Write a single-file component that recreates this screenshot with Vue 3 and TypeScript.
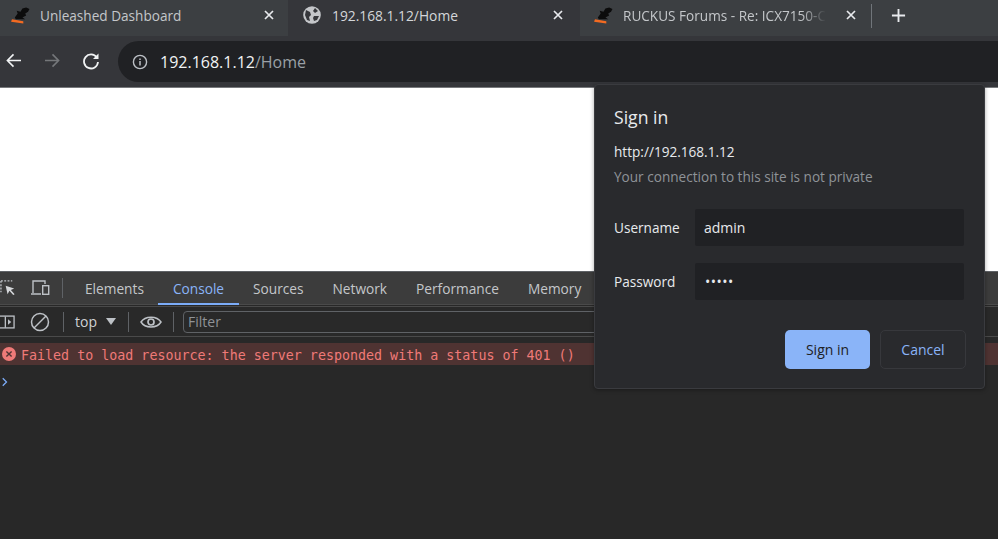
<script setup lang="ts">
const tabs = [
  { title: 'Unleashed Dashboard', icon: 'dog', cls: 'first' },
  { title: '192.168.1.12/Home', icon: 'globe', cls: 'active' },
  { title: 'RUCKUS Forums - Re: ICX7150-C', icon: 'dog', cls: 'third' },
]
const devTabs = ['Elements', 'Console', 'Sources', 'Network', 'Performance', 'Memory']
</script>

<template>
  <div class="page">
    <div class="strip">
      <div v-for="t in tabs" :key="t.title" class="tab" :class="t.cls">
        <svg v-if="t.icon === 'dog'" class="fav" viewBox="0 0 20 18">
          <path d="M4 11 L7 7 L6 4 L10 5 L12 1.500 L16 0.500 L19.500 2 L18 5 L15 7 L16 9 L12 11 L15 13 L5 13 Z" fill="#0c0c0c" />
          <path d="M1 13 L13 15 L13 17.500 L0 15.500 Z" fill="#f26a21" />
        </svg>
        <svg v-else class="fav globe" viewBox="0 0 18 18">
          <circle cx="9" cy="9" r="8.800" fill="#c4c6c9" />
          <path d="M3 4 L7 6 L8 9 L6 11 L7 15 L4 14 L2 9 Z M12 2 L15 5 L12 7 L10 5 Z M11 10 L16 10 L14 14 L11 15 L10 12 Z" fill="#36373b" />
        </svg>
        <span class="tab-title">{{ t.title }}</span>
        <svg class="close" viewBox="0 0 10 10"><path d="M1 1 L9 9 M9 1 L1 9" stroke="#e8eaed" stroke-width="1.7" /></svg>
      </div>
      <span class="sep"></span>
      <svg class="plus" viewBox="0 0 16 16"><path d="M8 1 V15 M1 8 H15" stroke="#e8eaed" stroke-width="2" /></svg>
    </div>

    <div class="toolbar">
      <svg class="nav back" viewBox="0 0 16 16"><path d="M16 8 H1.500 M8 1.500 L1.500 8 L8 14.500" fill="none" stroke="#f1f3f4" stroke-width="1.700" /></svg>
      <svg class="nav fwd" viewBox="0 0 16 16"><path d="M0 8 H14.500 M8 1.500 L14.500 8 L8 14.500" fill="none" stroke="#75777a" stroke-width="1.700" /></svg>
      <svg class="nav reload" viewBox="0 0 18 18"><path d="M14.800 5.500 A7 7 0 1 0 16 10" fill="none" stroke="#f1f3f4" stroke-width="1.800" /><path d="M16.500 1.500 V7 H11 Z" fill="#f1f3f4" /></svg>
      <div class="omni">
        <svg class="info" viewBox="0 0 16 16"><circle cx="8" cy="8" r="6.600" fill="none" stroke="#bdc1c6" stroke-width="1.400" /><path d="M8 7 V11.500 M8 4.400 V5.900" stroke="#bdc1c6" stroke-width="1.500" /></svg>
        <span class="host">192.168.1.12</span><span class="path">/Home</span>
      </div>
    </div>

    <div class="content"></div>

    <div class="devtools">
      <div class="dt-tabs">
        <svg class="dt-ic inspect" viewBox="0 0 18 18"><path d="M1 1 H13 M1 1 V13" stroke="#bdc1c6" stroke-width="1.400" stroke-dasharray="2 1.500" fill="none" /><path d="M6 6 L15 9 L11.500 10.500 L15.500 15 L14 16 L10 11.500 L8 15 Z" fill="#d5d7da" /></svg>
        <svg class="dt-ic device" viewBox="0 0 20 18"><path d="M3 14 V2 H15 V5 M1 15 H11" fill="none" stroke="#bdc1c6" stroke-width="1.400" /><rect x="12.700" y="6.700" width="6" height="8.600" fill="none" stroke="#bdc1c6" stroke-width="1.400" /></svg>
        <span class="dt-sep"></span>
        <span v-for="d in devTabs" :key="d" class="dt-tab" :class="{ on: d === 'Console' }">{{ d }}</span>
      </div>
      <div class="filter-row">
        <svg class="side" viewBox="0 0 16 16"><rect x="-3" y="1.700" width="18" height="12.600" fill="none" stroke="#bdc1c6" stroke-width="1.400" /><path d="M5.700 2 V14" stroke="#bdc1c6" stroke-width="1.400" /><path d="M8.500 5 L12 8 L8.500 11 Z" fill="#bdc1c6" /></svg>
        <svg class="clear" viewBox="0 0 20 20"><circle cx="10" cy="10" r="8.500" fill="none" stroke="#bdc1c6" stroke-width="1.500" /><path d="M4 16 L16 4" stroke="#bdc1c6" stroke-width="1.500" /></svg>
        <span class="f-sep"></span>
        <span class="top">top</span>
        <span class="caret"></span>
        <span class="f-sep"></span>
        <svg class="eye" viewBox="0 0 22 14"><path d="M1 7 C5 0.500 17 0.500 21 7 C17 13.500 5 13.500 1 7 Z" fill="none" stroke="#bdc1c6" stroke-width="1.500" /><circle cx="11" cy="7" r="3" fill="none" stroke="#bdc1c6" stroke-width="1.700" /></svg>
        <span class="f-sep"></span>
        <div class="filter">Filter</div>
      </div>
      <div class="err-row">
        <svg class="err-ic" viewBox="0 0 14 14"><circle cx="7" cy="7" r="7" fill="#ef7a78" /><path d="M4.400 4.400 L9.600 9.600 M9.600 4.400 L4.400 9.600" stroke="#4f3332" stroke-width="1.400" /></svg>
        <span class="err-text">Failed to load resource: the server responded with a status of 401 ()</span>
      </div>
      <div class="prompt-row">
        <svg class="prompt" viewBox="0 0 8 12"><path d="M1 1 L6 6 L1 11" fill="none" stroke="#7cacf8" stroke-width="1.700" /></svg>
      </div>
    </div>

    <div class="dialog">
      <h1>Sign in</h1>
      <div class="origin">http://192.168.1.12</div>
      <div class="private">Your connection to this site is not private</div>
      <div class="field first-field"><label>Username</label><div class="input">admin</div></div>
      <div class="field"><label>Password</label><div class="input dots">•••••</div></div>
      <div class="actions">
        <button class="primary">Sign in</button>
        <button class="cancel">Cancel</button>
      </div>
    </div>
  </div>
</template>

<style>
html, body { margin: 0; padding: 0; background: #282828; overflow: hidden; }
</style>

<style scoped>
.page {
  position: relative;
  width: 998px;
  height: 539px;
  overflow: hidden;
  display: flex;
  flex-direction: column;
  background: #282828;
  font-family: "Open Sans", "Noto Sans", sans-serif;
}
.strip {
  height: 36px;
  flex: none;
  display: flex;
  align-items: flex-start;
  background: #3c3f42;
}
.tab {
  display: flex;
  align-items: center;
  box-sizing: border-box;
  height: 36px;
  padding-bottom: 6px;
  color: #c4c7ca;
  font-size: 13.6px;
  white-space: nowrap;
  flex: none;
}
.tab.first { width: 288px; padding-left: 11px; border-radius: 0 0 8px 0; }
.tab.active { width: 292px; padding-left: 15px; background: #35363a; color: #d4d6d9; }
.tab.third { width: 290px; padding-left: 14px; border-radius: 0 0 0 8px; }
.fav { width: 19px; height: 17px; flex: none; margin-right: 10px; }
.globe { width: 18px; height: 18px; margin-right: 11px; }
.tab-title { flex: 1; overflow: hidden; }
.active .tab-title { font-size: 13.8px; }
.third .tab-title {
  max-width: 208px;
  flex: none;
  -webkit-mask-image: linear-gradient(90deg, #000 88%, transparent);
  mask-image: linear-gradient(90deg, #000 88%, transparent);
}
.close { width: 10px; height: 10px; flex: none; margin-right: 14px; }
.active .close { margin-right: 17px; }
.third .close { margin-left: 20px; margin-right: 0; }
.sep { width: 1px; height: 24px; background: #70757a; margin: 4px 0 0 1px; flex: none; }
.plus { width: 15px; height: 15px; margin: 8px 0 0 19px; flex: none; }
.toolbar {
  height: 52px;
  flex: none;
  display: flex;
  align-items: flex-start;
  box-sizing: border-box;
  background: #35363a;
  border-bottom: 1px solid #77797c;
}
.nav { flex: none; margin-top: 17px; }
.back { width: 17px; height: 15px; margin-left: 5px; }
.fwd { width: 17px; height: 15px; margin-left: 22px; }
.reload { width: 18px; height: 18px; margin-left: 21px; margin-top: 16px; }
.omni {
  margin: 5px 0 0 18px;
  flex: 1;
  height: 41px;
  border-radius: 21px 0 0 21px;
  background: #202124;
  display: flex;
  align-items: center;
  padding-left: 14px;
  font-size: 16px;
}
.info { width: 16px; height: 16px; margin-right: 12px; }
.host { color: #f1f3f4; }
.path { color: #9aa0a6; }
.content { height: 183px; flex: none; background: #fff; }
.devtools { flex: 1; background: #282828; }
.dt-tabs {
  height: 34px;
  display: flex;
  align-items: center;
  background: #3c3c3c;
  border-top: 1px solid #5f6266;
  box-sizing: border-box;
  border-bottom: 1px solid #4a4a4a;
  color: #c4c7ca;
  font-size: 13.7px;
}
.dt-ic { flex: none; }
.inspect { width: 17px; height: 17px; }
.device { width: 20px; height: 18px; margin-left: 13px; }
.dt-sep { width: 1px; height: 20px; background: #5f6266; margin: 0 7.5px 0 12px; flex: none; }
.dt-tab { padding: 0 14.5px; height: 33px; line-height: 34px; box-sizing: border-box; }
.dt-tab.on { color: #8ab4f8; border-bottom: 2px solid #7cacf8; }
.filter-row {
  height: 31px;
  display: flex;
  align-items: center;
  box-sizing: border-box;
  background: #292929;
  border-top: 1px solid #4a4a4a;
  border-bottom: 1px solid #4a4a4a;
  color: #d0d2d5;
  font-size: 14px;
  margin-top: 1px;
}
.side { width: 15px; height: 16px; flex: none; }
.clear { width: 20px; height: 20px; margin-left: 15px; flex: none; }
.f-sep { width: 1px; height: 20px; background: #5f6266; flex: none; margin: 0 11px 0 0; }
.clear + .f-sep { margin-left: 13px; }
.top { margin-right: 9px; }
.caret {
  width: 0;
  height: 0;
  border-left: 5px solid transparent;
  border-right: 5px solid transparent;
  border-top: 7px solid #bdc1c6;
  margin-right: 12px;
  margin-top: -1px;
}
.eye { width: 22px; height: 14px; margin-right: 11px; flex: none; }
.filter {
  width: 500px;
  height: 22px;
  margin-left: -2px;
  flex: none;
  box-sizing: border-box;
  border: 1px solid #5f6266;
  border-radius: 4px 0 0 4px;
  padding-left: 4px;
  color: #8f9296;
  line-height: 20px;
}
.err-row {
  margin-top: 6px;
  height: 22px;
  display: flex;
  align-items: center;
  background: #4f3332;
  color: #ef7a78;
  font-family: "DejaVu Sans Mono", monospace;
  font-size: 13.33px;
}
.err-text { padding-top: 2px; }
.err-ic { width: 14px; height: 14px; margin: 0 5px 0 2px; flex: none; }
.prompt-row { height: 33px; display: flex; align-items: center; padding-left: 2px; }
.prompt { width: 6px; height: 10px; }
.dialog {
  position: absolute;
  left: 594px;
  top: 84px;
  width: 391px;
  height: 305px;
  box-sizing: border-box;
  padding: 20px 18px 0 19px;
  background: #292a2d;
  border: 1px solid #3a3b3f;
  border-radius: 4px;
  box-shadow: 0 1px 4px rgba(0, 0, 0, 0.35);
  color: #e8eaed;
}
h1 { margin: 0; font-size: 17.6px; font-weight: 400; line-height: 24px; }
.origin { margin-top: 13px; font-size: 13.6px; line-height: 20px; }
.private { margin-top: 5px; font-size: 13.6px; line-height: 20px; color: #8f9398; }
.field { display: flex; align-items: center; margin-top: 17px; font-size: 13.6px; }
.first-field { margin-top: 22px; }
.field label { width: 81px; flex: none; }
.input {
  width: 269px;
  height: 37px;
  box-sizing: border-box;
  padding-left: 9px;
  line-height: 37px;
  background: #202124;
  font-size: 14px;
  border-radius: 2px;
}
.dots { letter-spacing: 0.5px; padding-left: 10px; }
.actions { display: flex; justify-content: flex-end; gap: 10px; margin-top: 30px; }
button {
  font-family: inherit;
  font-size: 14px;
  font-weight: 500;
  height: 39px;
  border-radius: 5px;
  padding: 0;
}
.primary { width: 85px; background: #8ab4f8; border: 0; color: #202124; }
.cancel { width: 86px; background: #292a2d; border: 1px solid #37383c; color: #8ab4f8; }
</style>
